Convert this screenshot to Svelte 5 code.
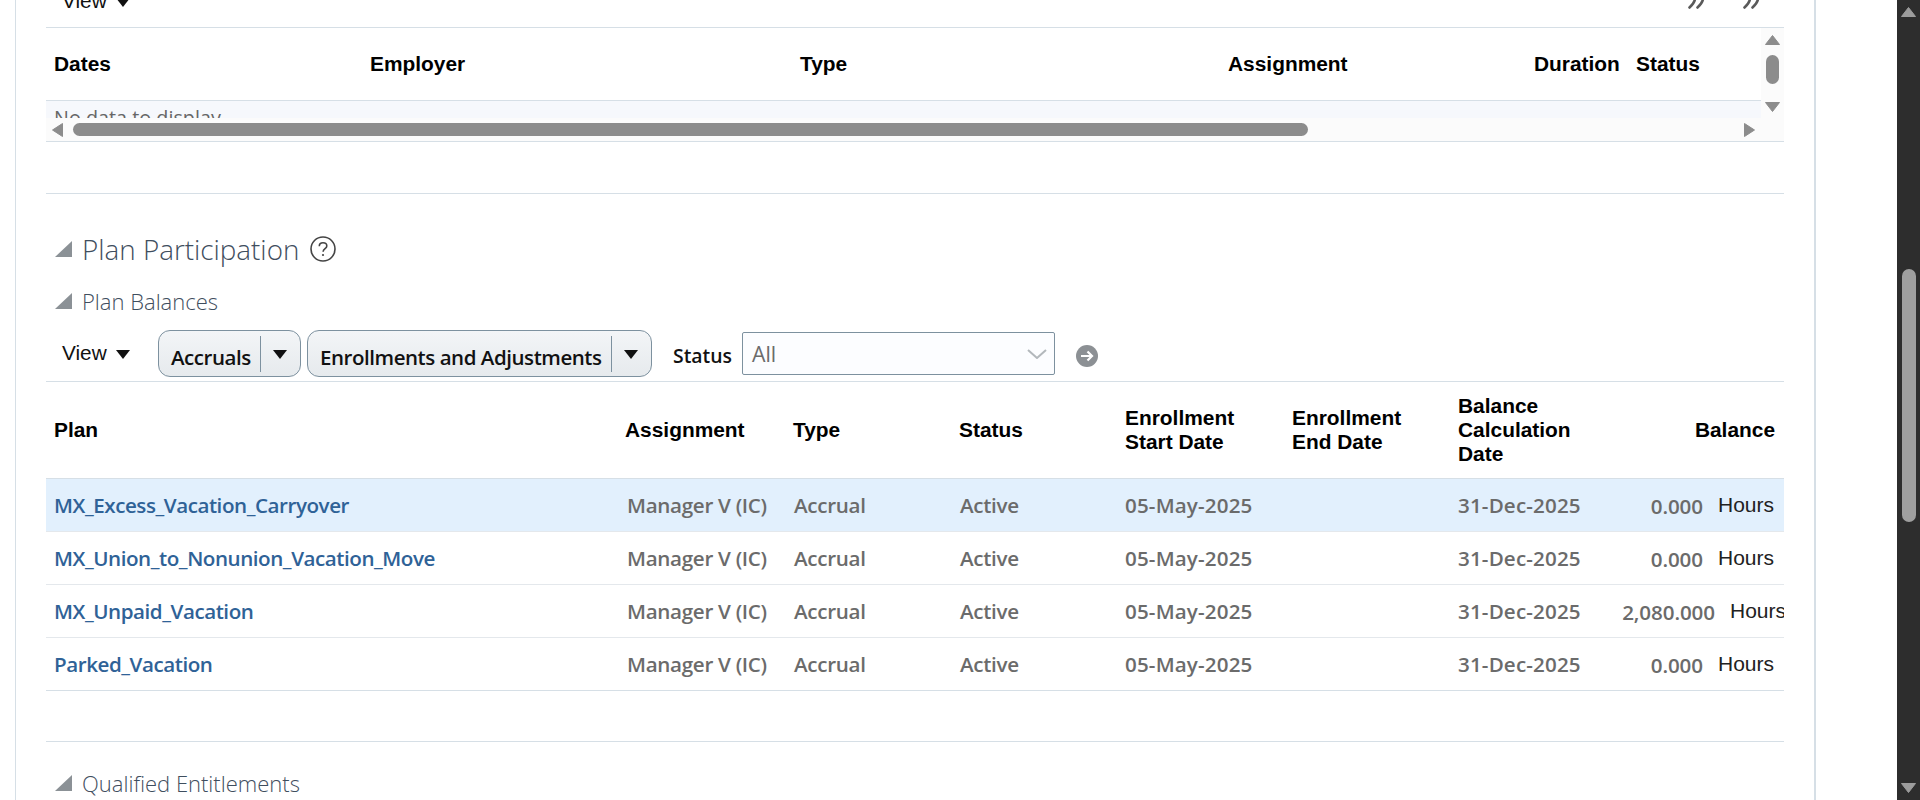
<script>
  const topCols = ['Dates', 'Employer', 'Type', 'Assignment', 'Duration', 'Status'];
  const rows = [
    { plan: 'MX_Excess_Vacation_Carryover', bal: '0.000', selected: true },
    { plan: 'MX_Union_to_Nonunion_Vacation_Move', bal: '0.000' },
    { plan: 'MX_Unpaid_Vacation', bal: '2,080.000', wide: true },
    { plan: 'Parked_Vacation', bal: '0.000' }
  ];
</script>

<div class="viewport">
  <main class="page">
    <div class="panel">
      <div class="clip-toolbar">
        <div class="view-top">View <span class="caret"></span></div>
        <div class="quotes">
          {#each [0, 1] as q (q)}
            <svg viewBox="0 0 17 9"><path d="M7 -1 Q6.5 3 1.5 7.5 M15 -1 Q14.5 3 9.5 7.5" /></svg>
          {/each}
        </div>
      </div>

      <section class="top-table">
        <div class="top-head-row">
          <div class="top-head">
            {#each topCols as c}<div class="th">{c}</div>{/each}
          </div>
          <div class="vscroll">
            <svg class="tri" viewBox="0 0 15 10"><path d="M7.5 0.5 L14.5 9.5 H0.5 Z" /></svg>
            <div class="vthumb"></div>
            <svg class="tri down" viewBox="0 0 15 10"><path d="M7.5 9.5 L14.5 0.5 H0.5 Z" /></svg>
          </div>
        </div>
        <div class="nodata"><span>No data to display.</span></div>
        <div class="hscroll">
          <svg class="harrow" viewBox="0 0 11 14"><path d="M0.5 7 L10.5 0.5 V13.5 Z" /></svg>
          <div class="htrack"><div class="hthumb"></div></div>
          <svg class="harrow right" viewBox="0 0 11 14"><path d="M10.5 7 L0.5 0.5 V13.5 Z" /></svg>
        </div>
      </section>

      <div class="sep first"></div>

      <h2 class="h-main">
        <svg class="disc" viewBox="0 0 17 16"><path d="M17 0 V16 H0 Z" /></svg>
        <span>Plan Participation</span>
        <svg class="help" viewBox="0 0 26 26">
          <circle cx="13" cy="13" r="12" />
          <path d="M9.3 10.2 C9.3 8 11 6.8 13 6.8 C15.2 6.8 16.8 8.2 16.8 10 C16.8 12.6 13.1 12.8 13.1 15.8" />
          <circle class="dot" cx="13" cy="19" r="1.1" />
        </svg>
      </h2>

      <h3 class="h-sub">
        <svg class="disc" viewBox="0 0 17 16"><path d="M17 0 V16 H0 Z" /></svg>
        <span>Plan Balances</span>
      </h3>

      <div class="toolbar">
        <div class="view">View <span class="caret"></span></div>
        <div class="btn accr"><span class="lbl">Accruals</span><span class="bcaret"><span class="caret"></span></span></div>
        <div class="btn enr"><span class="lbl">Enrollments and Adjustments</span><span class="bcaret"><span class="caret"></span></span></div>
        <label class="status-label" for="st">Status</label>
        <div class="select" id="st">
          <span>All</span>
          <svg viewBox="0 0 20 10"><path d="M1 1 L10 9 L19 1" /></svg>
        </div>
        <svg class="go" viewBox="0 0 22 22">
          <circle cx="11" cy="11" r="11" />
          <path d="M5 11 H16 M11.5 6.5 L16 11 L11.5 15.5" />
        </svg>
      </div>

      <section class="plans">
        <div class="row head">
          <div class="pth">Plan</div>
          <div class="pth">Assignment</div>
          <div class="pth">Type</div>
          <div class="pth">Status</div>
          <div class="pth">Enrollment<br />Start Date</div>
          <div class="pth">Enrollment<br />End Date</div>
          <div class="pth">Balance<br />Calculation<br />Date</div>
          <div class="pth right">Balance</div>
        </div>
        {#each rows as r}
          <div class="row body" class:selected={r.selected}>
            <a href="#top" class="plan">{r.plan}</a>
            <div class="cell first">Manager V (IC)</div>
            <div class="cell">Accrual</div>
            <div class="cell">Active</div>
            <div class="cell date">05-May-2025</div>
            <div class="cell"></div>
            <div class="cell date">31-Dec-2025</div>
            <div class="bal" class:wide={r.wide}><span class="num">{r.bal}</span><span class="unit">Hours</span></div>
          </div>
        {/each}
      </section>

      <div class="sep second"></div>

      <h3 class="h-sub last">
        <svg class="disc" viewBox="0 0 17 16"><path d="M17 0 V16 H0 Z" /></svg>
        <span>Qualified Entitlements</span>
      </h3>
    </div>
  </main>

  <aside class="pagebar">
    <svg class="ptri" viewBox="0 0 15 10"><path d="M7.5 0.5 L14.5 9.5 H0.5 Z" /></svg>
    <div class="pthumb"></div>
    <svg class="ptri" viewBox="0 0 15 10"><path d="M7.5 9.5 L14.5 0.5 H0.5 Z" /></svg>
  </aside>
</div>

<style>
  :global(body) { margin: 0; background: #fff; }
  .viewport { display: flex; width: 1920px; height: 800px; overflow: hidden; background: #fff; font-family: "Liberation Sans", Arial, sans-serif; }
  .page { flex: 1; min-width: 0; overflow: hidden; }
  .panel { box-sizing: border-box; width: 1801px; height: 800px; margin-left: 15px; border-left: 1px solid #d6dfe6; border-right: 2px solid #d6dfe6; padding: 0 30px; overflow: hidden; }

  .clip-toolbar { height: 27px; position: relative; overflow: hidden; }
  .view-top { position: absolute; left: 16px; top: -11px; font-size: 20.8px; line-height: 24px; color: #111; }
  .quotes { position: absolute; left: 1642px; top: 0; display: flex; gap: 38px; }
  .quotes svg { width: 17px; height: 9px; fill: none; stroke: #5a5a5a; stroke-width: 2.6; stroke-linecap: round; display: block; }
  .caret { display: inline-block; width: 0; height: 0; margin-left: 4px; border-left: 7px solid transparent; border-right: 7px solid transparent; border-top: 9px solid #111; vertical-align: 1px; }

  .top-table { border-top: 1px solid #d6dfe6; border-bottom: 1px solid #d6dfe6; height: 113px; position: relative; overflow: hidden; box-sizing: content-box; margin-top: 0; }
  .top-head-row { display: flex; height: 90px; background: #fff; position: relative; }
  .top-head { width: 1715px; height: 72px; display: grid; grid-template-columns: 316px 430px 428px 306px 102px 133px; border-bottom: 1px solid #d6dfe6; box-sizing: content-box; align-items: center; }
  .th { padding-left: 8px; font-weight: 700; font-size: 20.9px; color: #000; }
  .vscroll { width: 23px; height: 90px; background: #fbfbfb; display: flex; flex-direction: column; align-items: center; }
  .tri { width: 15px; height: 10px; margin-top: 7px; fill: #8c8c8c; stroke: #8c8c8c; stroke-linejoin: round; }
  .tri.down { margin-top: 18px; }
  .vthumb { width: 13px; height: 29px; margin-top: 10px; background: #8c8c8c; border-radius: 6.5px; }
  .nodata { position: absolute; left: 0; top: 73px; width: 1715px; height: 17px; background: #f6f8fc; overflow: hidden; font-family: "Open Sans", sans-serif; font-size: 19.8px; line-height: 24px; color: #666; }
  .nodata span { display: block; padding: 5px 0 0 8px; }
  .hscroll { position: absolute; left: 0; right: 0; top: 90px; height: 23px; background: #fbfbfb; display: flex; align-items: center; }
  .harrow { width: 11px; height: 14px; margin-left: 6px; fill: #8c8c8c; stroke: #8c8c8c; stroke-linejoin: round; flex: none; }
  .harrow.right { margin-left: 0; }
  .htrack { width: 1681px; height: 13px; padding-left: 10px; box-sizing: border-box; }
  .hthumb { width: 1235px; height: 13px; background: #8c8c8c; border-radius: 6.5px; }

  .sep { height: 1px; background: #d6dfe6; }
  .sep.first { margin-top: 51px; }

  .h-main, .h-sub { margin: 0; display: flex; align-items: center; font-family: "Open Sans", sans-serif; font-weight: 300; color: #3f4e5e; white-space: nowrap; }
  .h-main { padding-left: 9px; margin-top: 41px; height: 28px; font-size: 27.8px; }
  .h-sub { padding-left: 9px; margin-top: 26px; height: 24px; font-size: 22px; }
  .disc { width: 17px; height: 16px; margin-right: 10px; fill: #8b9196; flex: none; }
  .help { width: 26px; height: 26px; margin-left: 11px; fill: none; stroke: #444; stroke-width: 1.6; }
  .help .dot { fill: #444; stroke: none; }

  .toolbar { position: relative; height: 54px; margin-top: 14px; display: flex; align-items: flex-start; font-family: "Open Sans", sans-serif; }
  .view { font-family: "Liberation Sans", sans-serif; font-size: 20.8px; line-height: 24px; color: #111; margin: 14px 0 0 16px; width: 96px; flex: none; white-space: nowrap; }
  .btn { box-sizing: border-box; height: 47px; margin-top: 3px; border: 1px solid #7d919f; border-radius: 12px; background: linear-gradient(#f3f5f7, #e6eaed); display: flex; align-items: center; flex: none; color: #111; }
  .accr { width: 143px; }
  .enr { width: 345px; margin-left: 6px; }
  .lbl { padding-left: 12px; font-size: 20.5px; font-weight: 600; white-space: nowrap; flex: 1; margin-top: 6px; letter-spacing: -0.45px; }
  .bcaret { width: 40px; height: 36px; padding-right: 2px; border-left: 1px solid #7d919f; display: flex; justify-content: center; flex: none; box-sizing: border-box; }
  .bcaret .caret { margin: 14px 0 0; }
  .status-label { margin: 15px 0 0 21px; width: 69px; font-size: 19.4px; font-weight: 600; color: #111; flex: none; }
  .select { box-sizing: border-box; margin-top: 5px; width: 313px; height: 43px; border: 1px solid #7d919f; border-radius: 2px; background: #fcfdff; display: flex; align-items: center; justify-content: space-between; padding: 0 7px 0 9px; color: #6b6b6b; font-size: 21.3px; flex: none; }
  .select svg { width: 20px; height: 10px; fill: none; stroke: #b3b8bc; stroke-width: 2; }
  .go { width: 22px; height: 22px; margin: 18px 0 0 21px; flex: none; }
  .go circle { fill: #8c9094; }
  .go path { fill: none; stroke: #fff; stroke-width: 2.2; }

  .plans { border-top: 1px solid #d6dfe6; border-bottom: 1px solid #d6dfe6; overflow: hidden; }
  .row { display: grid; grid-template-columns: 571px 168px 166px 166px 167px 166px 166px 168px; }
  .row.head { height: 96px; align-items: center; border-bottom: 1px solid #d6dfe6; box-sizing: content-box; }
  .pth { padding-left: 8px; font-weight: 700; font-size: 20.9px; line-height: 24px; color: #000; }
  .pth.right { text-align: right; padding-right: 9px; padding-left: 0; }
  .row.body { height: 52px; align-items: center; border-bottom: 1px solid #e4e8ec; font-family: "Open Sans", sans-serif; font-size: 20.6px; }
  .row.body:last-child { border-bottom: 0; }
  .row.selected { background: #e2f0fd; }
  .plan { padding: 0 0 0 8px; color: #2f6297; font-weight: 600; text-decoration: none; white-space: nowrap; letter-spacing: -0.45px; }
  .cell { padding: 0 0 0 9px; color: #6b6b6b; font-weight: 600; white-space: nowrap; letter-spacing: -0.3px; }
  .cell.first { padding-left: 10px; }
  .cell.date { padding-left: 8px; letter-spacing: 0.15px; }
  .bal { display: flex; justify-content: flex-end; align-items: center; padding-right: 10px; white-space: nowrap; color: #6b6b6b; font-weight: 600; }
  .bal.wide { padding-right: 0; margin-right: -2px; }
  .num { padding-top: 2px; letter-spacing: -0.1px; }
  .unit { margin-left: 15px; font-family: "Liberation Sans", sans-serif; font-weight: 400; font-size: 21px; color: #222; }

  .sep.second { margin-top: 50px; }
  .h-sub.last { margin-top: 29px; }

  .pagebar { width: 23px; height: 800px; background: #2d2d2d; display: flex; flex-direction: column; align-items: center; flex: none; position: relative; }
  .ptri { width: 15px; height: 10px; fill: #9c9c9c; stroke: #9c9c9c; stroke-linejoin: round; position: absolute; top: 7px; }
  .ptri:last-child { top: 783px; }
  .pthumb { position: absolute; top: 269px; width: 14px; height: 253px; background: #9f9f9f; border-radius: 7px; }
</style>
